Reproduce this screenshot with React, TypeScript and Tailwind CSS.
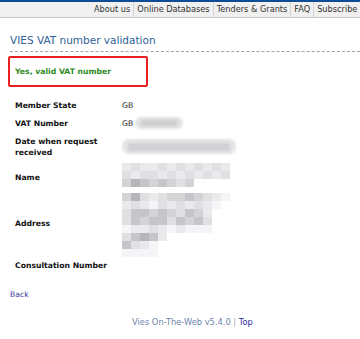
const navItems = ['About us', 'Online Databases', 'Tenders & Grants', 'FAQ', 'Subscribe'];

function Mosaic({ rows }: { rows: string[][] }) {
  return (
    <div className="flex flex-col blur-[0.5px]">
      {rows.map((row, i) => (
        <div key={i} className="flex h-[8px]">
          {row.map((c, j) => (
            <div key={j} className={`w-[9px] h-[8px] ${c}`} />
          ))}
        </div>
      ))}
    </div>
  );
}

const a = 'bg-[#d4d4d6]';
const b = 'bg-[#c6c6ca]';
const c = 'bg-[#e0e0e2]';
const d = 'bg-[#eaeaec]';
const e = 'bg-[#b6b6ba]';
const f = 'bg-[#f5f5f7]';
const w = 'bg-white';

const nameRows = [
  [d, c, d, d, c, d, c, d, c, d, c, d],
  [c, d, c, c, d, c, d, c, d, c, d, c],
  [a, e, b, a, b, a, c, a],
];
const addressRows = [
  [a, e, c, d, c, a, a, b, a, c, d, f],
  [d, c, d, f, c, d, c, d, c, d, f, w],
  [c, b, b, a, b, a, c, b, a, d, w],
  [c, b, a, b, b, c, b, a, b, c, w],
  [f, d, d, c, d, f, d, f, f, f],
  [c, b, e, b, d],
  [b, c, d, f],
  [f, f, f, f],
];

function Row({ label, children, className = '' }: { label: React.ReactNode; children?: React.ReactNode; className?: string }) {
  return (
    <div className={`flex items-center ${className}`}>
      <div className="w-[107px] font-bold text-[#111]">{label}</div>
      <div className="flex-1">{children}</div>
    </div>
  );
}

export default function App() {
  return (
    <div
      className="w-[360px] h-[339px] bg-white overflow-hidden text-[7.7px] leading-[11px] text-[#222]"
      style={{ fontFamily: '"DejaVu Sans", Verdana, sans-serif' }}
    >
      <div className="h-[2px] bg-[#0f4c96]" />
      <div className="h-[16px] bg-[#f0f0f0] border-b border-[#c8c8c8] flex items-center pl-[91px] whitespace-nowrap text-[8.2px] text-[#333]">
        {navItems.map((n, i) => (
          <div
            key={n}
            className={`px-[3px] h-full flex items-center ${i > 0 ? 'border-l border-[#d4d4d4]' : ''}`}
          >
            {n}
          </div>
        ))}
      </div>

      <div className="px-[10px]">
        <div className="mt-[16px] text-[10.5px] leading-[13px] text-[#2f6196] pb-[4px] border-b border-dashed border-[#9aa5b1] mr-[-10px]">
          VIES VAT number validation
        </div>

        <div className="mt-[4px] ml-[-2px] w-[140px] h-[31px] border-2 border-[#ea2020] rounded-[2px] flex items-center pl-[5px] font-bold text-[#2e8a1e]">
          Yes, valid VAT number
        </div>

        <div className="mt-[9px] pl-[5px] flex flex-col">
          <Row label="Member State" className="h-[18px]">
            GB
          </Row>
          <Row label="VAT Number" className="h-[18px]">
            <div className="flex items-center gap-[2px]">
              <span>GB</span>
              <div className="w-[48px] h-[12px] rounded-[6px] bg-[#e2e2e4] blur-[1px] flex items-center px-[6px]">
                <div className="w-full h-[6px] bg-[#cfcfd2]" />
              </div>
            </div>
          </Row>
          <Row label={<>Date when request<br />received</>} className="h-[29px]">
            <div className="w-[114px] h-[15px] rounded-[7px] bg-[#e4e4e6] blur-[1px] flex items-center px-[6px]">
              <div className="w-full h-[8px] bg-[#d2d2d5]" />
            </div>
          </Row>
          <Row label="Name" className="h-[32px]">
            <div className="mb-[4px]">
              <Mosaic rows={nameRows} />
            </div>
          </Row>
          <Row label={<div className="mb-[4px]">Address</div>} className="h-[64px]">
            <Mosaic rows={addressRows} />
          </Row>
          <Row label="Consultation Number" className="h-[16px]" />
        </div>

        <div className="mt-[16px] text-[#3a3a9e]">Back</div>

        <div className="mt-[17px] ml-[122px] whitespace-nowrap text-[8.3px] text-[#6c86aa]">
          Vies On-The-Web v5.4.0 <span className="text-[#aaa]">|</span>{' '}
          <span className="text-[#2b2ba0]">Top</span>
        </div>
      </div>
    </div>
  );
}
